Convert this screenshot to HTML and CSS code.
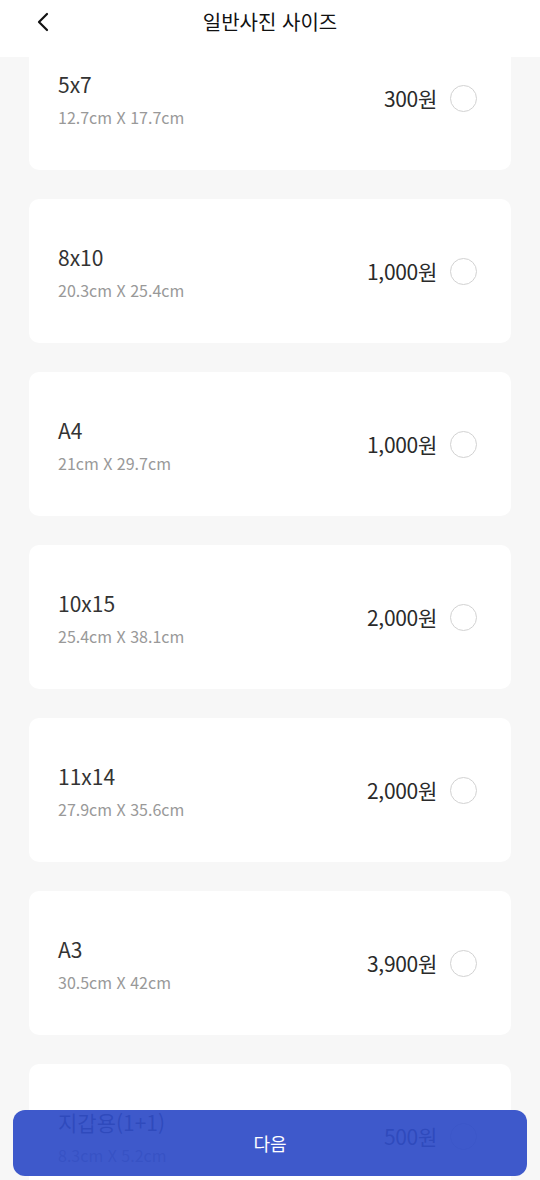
FILE: index.html
```html
<!DOCTYPE html>
<html lang="ko">
<head>
<meta charset="utf-8">
<title>일반사진 사이즈</title>
<link rel="stylesheet" href="styles.css">
</head>
<body>
<header class="topbar">
  <span class="back">
    <svg width="14" height="20" viewBox="0 0 14 20"><path d="M11 2 L3 10 L11 18" fill="none" stroke="#111" stroke-width="2.2" stroke-linecap="round" stroke-linejoin="round"/></svg>
  </span>
  <h1 class="title">일반사진 사이즈</h1>
</header>
<main class="list">
  <div class="card"><div class="info"><div class="name">5x7</div><div class="dim">12.7cm X 17.7cm</div></div><div class="right"><span class="price">300원</span><span class="radio"></span></div></div>
  <div class="card"><div class="info"><div class="name">8x10</div><div class="dim">20.3cm X 25.4cm</div></div><div class="right"><span class="price">1,000원</span><span class="radio"></span></div></div>
  <div class="card"><div class="info"><div class="name">A4</div><div class="dim">21cm X 29.7cm</div></div><div class="right"><span class="price">1,000원</span><span class="radio"></span></div></div>
  <div class="card"><div class="info"><div class="name">10x15</div><div class="dim">25.4cm X 38.1cm</div></div><div class="right"><span class="price">2,000원</span><span class="radio"></span></div></div>
  <div class="card"><div class="info"><div class="name">11x14</div><div class="dim">27.9cm X 35.6cm</div></div><div class="right"><span class="price">2,000원</span><span class="radio"></span></div></div>
  <div class="card"><div class="info"><div class="name">A3</div><div class="dim">30.5cm X 42cm</div></div><div class="right"><span class="price">3,900원</span><span class="radio"></span></div></div>
  <div class="card"><div class="info"><div class="name">지갑용(1+1)</div><div class="dim">8.3cm X 5.2cm</div></div><div class="right"><span class="price">500원</span><span class="radio"></span></div></div>
</main>
<button class="next">다음</button>
</body>
</html>
```
FILE: styles.css
```css
html, body {
  margin: 0;
  padding: 0;
}
body {
  background: #f7f7f7;
  font-family: "Noto Sans CJK KR", "Noto Sans", sans-serif;
  width: 540px;
  height: 1180px;
  overflow: hidden;
  position: relative;
}
.topbar {
  position: absolute;
  top: 0;
  left: 0;
  right: 0;
  height: 57px;
  background: #fff;
  z-index: 2;
  display: flex;
  align-items: flex-start;
  justify-content: center;
}
.back {
  position: absolute;
  left: 36px;
  top: 12px;
  display: block;
  line-height: 0;
}
.title {
  margin: 0;
  padding-top: 7px;
  font-size: 20px;
  line-height: 30px;
  font-weight: 400;
  color: #111;
}
.list {
  padding: 26px 29px 0;
  display: flex;
  flex-direction: column;
  gap: 29px;
}
.card {
  background: #fff;
  border-radius: 10px;
  height: 144px;
  box-sizing: border-box;
  padding: 0 34px 0 29px;
  display: flex;
  align-items: center;
  justify-content: space-between;
  flex-shrink: 0;
}
.info {
  display: flex;
  flex-direction: column;
  gap: 6px;
  margin-top: 2px;
}
.name {
  font-size: 21px;
  line-height: 30px;
  color: #333;
  font-weight: 400;
}
.dim {
  font-size: 16px;
  line-height: 24px;
  color: #999;
}
.right {
  display: flex;
  align-items: center;
  gap: 13px;
}
.price {
  font-size: 21px;
  line-height: 28px;
  font-weight: 400;
  color: #2a2a2a;
  letter-spacing: -0.3px;
}
.radio {
  width: 27px;
  height: 27px;
  box-sizing: border-box;
  border: 1.5px solid #d2d2d2;
  border-radius: 50%;
  background: #fff;
}
.next {
  position: absolute;
  left: 13px;
  top: 1110px;
  width: 514px;
  height: 66px;
  border: none;
  border-radius: 12px;
  background: rgba(47, 76, 199, 0.93);
  color: #fff;
  font-family: "Noto Sans CJK KR", "Noto Sans", sans-serif;
  font-size: 18px;
  font-weight: 400;
  padding: 0;
  z-index: 3;
}
```
